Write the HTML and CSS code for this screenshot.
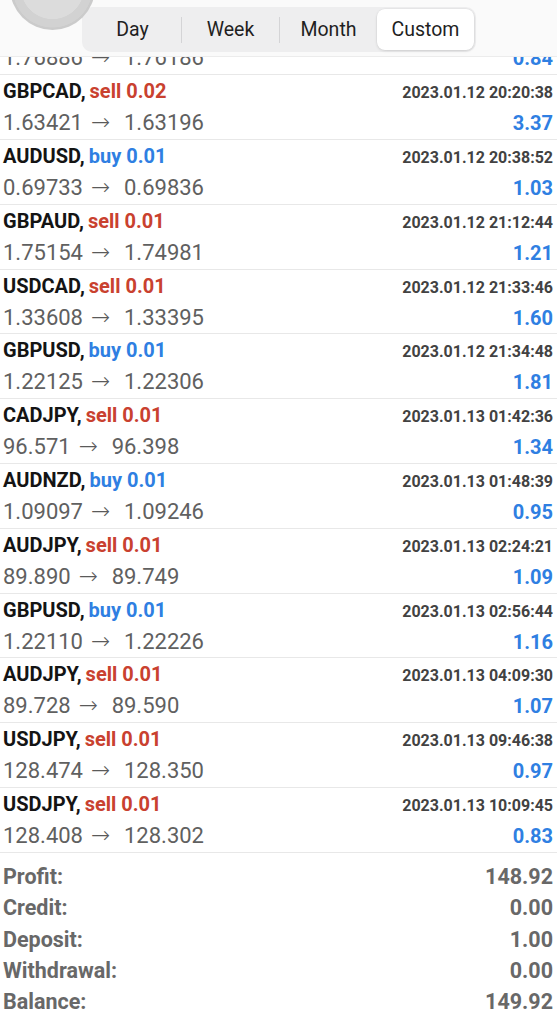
FILE: index.html
```html
<!DOCTYPE html>
<html>
<head>
<meta charset="utf-8">
<link rel="stylesheet" href="styles.css">
</head>
<body>
<div class="screen">
  <div class="list">
    <div class="row">
      <div class="line top"></div>
      <div class="line bottom"><span class="price">1.76886<span class="arrow">→</span>1.76186</span><span class="pl">0.84</span></div>
    </div>
    <div class="row">
      <div class="line top"><span class="head"><span class="sym">GBPCAD,</span> <span class="side sell">sell 0.02</span></span><span class="time">2023.01.12 20:20:38</span></div>
      <div class="line bottom"><span class="price">1.63421<span class="arrow">→</span>1.63196</span><span class="pl">3.37</span></div>
    </div>
    <div class="row">
      <div class="line top"><span class="head"><span class="sym">AUDUSD,</span> <span class="side buy">buy 0.01</span></span><span class="time">2023.01.12 20:38:52</span></div>
      <div class="line bottom"><span class="price">0.69733<span class="arrow">→</span>0.69836</span><span class="pl">1.03</span></div>
    </div>
    <div class="row">
      <div class="line top"><span class="head"><span class="sym">GBPAUD,</span> <span class="side sell">sell 0.01</span></span><span class="time">2023.01.12 21:12:44</span></div>
      <div class="line bottom"><span class="price">1.75154<span class="arrow">→</span>1.74981</span><span class="pl">1.21</span></div>
    </div>
    <div class="row">
      <div class="line top"><span class="head"><span class="sym">USDCAD,</span> <span class="side sell">sell 0.01</span></span><span class="time">2023.01.12 21:33:46</span></div>
      <div class="line bottom"><span class="price">1.33608<span class="arrow">→</span>1.33395</span><span class="pl">1.60</span></div>
    </div>
    <div class="row">
      <div class="line top"><span class="head"><span class="sym">GBPUSD,</span> <span class="side buy">buy 0.01</span></span><span class="time">2023.01.12 21:34:48</span></div>
      <div class="line bottom"><span class="price">1.22125<span class="arrow">→</span>1.22306</span><span class="pl">1.81</span></div>
    </div>
    <div class="row">
      <div class="line top"><span class="head"><span class="sym">CADJPY,</span> <span class="side sell">sell 0.01</span></span><span class="time">2023.01.13 01:42:36</span></div>
      <div class="line bottom"><span class="price">96.571<span class="arrow">→</span>96.398</span><span class="pl">1.34</span></div>
    </div>
    <div class="row">
      <div class="line top"><span class="head"><span class="sym">AUDNZD,</span> <span class="side buy">buy 0.01</span></span><span class="time">2023.01.13 01:48:39</span></div>
      <div class="line bottom"><span class="price">1.09097<span class="arrow">→</span>1.09246</span><span class="pl">0.95</span></div>
    </div>
    <div class="row">
      <div class="line top"><span class="head"><span class="sym">AUDJPY,</span> <span class="side sell">sell 0.01</span></span><span class="time">2023.01.13 02:24:21</span></div>
      <div class="line bottom"><span class="price">89.890<span class="arrow">→</span>89.749</span><span class="pl">1.09</span></div>
    </div>
    <div class="row">
      <div class="line top"><span class="head"><span class="sym">GBPUSD,</span> <span class="side buy">buy 0.01</span></span><span class="time">2023.01.13 02:56:44</span></div>
      <div class="line bottom"><span class="price">1.22110<span class="arrow">→</span>1.22226</span><span class="pl">1.16</span></div>
    </div>
    <div class="row">
      <div class="line top"><span class="head"><span class="sym">AUDJPY,</span> <span class="side sell">sell 0.01</span></span><span class="time">2023.01.13 04:09:30</span></div>
      <div class="line bottom"><span class="price">89.728<span class="arrow">→</span>89.590</span><span class="pl">1.07</span></div>
    </div>
    <div class="row">
      <div class="line top"><span class="head"><span class="sym">USDJPY,</span> <span class="side sell">sell 0.01</span></span><span class="time">2023.01.13 09:46:38</span></div>
      <div class="line bottom"><span class="price">128.474<span class="arrow">→</span>128.350</span><span class="pl">0.97</span></div>
    </div>
    <div class="row">
      <div class="line top"><span class="head"><span class="sym">USDJPY,</span> <span class="side sell">sell 0.01</span></span><span class="time">2023.01.13 10:09:45</span></div>
      <div class="line bottom"><span class="price">128.408<span class="arrow">→</span>128.302</span><span class="pl">0.83</span></div>
    </div>
  </div>
  <div class="summary">
    <div class="sum-line"><span>Profit:</span><span>148.92</span></div>
    <div class="sum-line"><span>Credit:</span><span>0.00</span></div>
    <div class="sum-line"><span>Deposit:</span><span>1.00</span></div>
    <div class="sum-line"><span>Withdrawal:</span><span>0.00</span></div>
    <div class="sum-line"><span>Balance:</span><span>149.92</span></div>
  </div>

  <div class="header">
    <div class="bubble"></div>
    <div class="segmented">
      <div class="seg">Day</div>
      <div class="divider"></div>
      <div class="seg">Week</div>
      <div class="divider"></div>
      <div class="seg">Month</div>
      <div class="seg selected">Custom</div>
    </div>
  </div>
</div>
</body>
</html>
```
FILE: styles.css
```css
html, body {
  margin: 0;
  padding: 0;
  background: #ffffff;
}

body {
  font-family: Roboto, "Liberation Sans", Arial, sans-serif;
  overflow: hidden;
}

.screen {
  position: relative;
  width: 557px;
  height: 1024px;
  overflow: hidden;
  background: #ffffff;
}

.list {
  padding-top: 10.2px;
}

.row {
  box-sizing: border-box;
  height: 64.83px;
  padding: 0 4px 0 3px;
  border-bottom: 1px solid #e8e8e8;
}

.line {
  display: flex;
  justify-content: space-between;
  align-items: baseline;
  white-space: nowrap;
}

.line.top {
  height: 32px;
  line-height: 32px;
}

.line.bottom {
  height: 31px;
  line-height: 31px;
}

.sym {
  font-size: 20px;
  font-weight: 700;
  color: #141414;
}

.side {
  font-size: 20px;
  font-weight: 700;
}

.sell {
  color: #c9412f;
}

.buy {
  color: #2f7fe2;
}

.time {
  font-size: 16px;
  font-weight: 700;
  color: #424242;
}

.price {
  font-size: 22px;
  font-weight: 400;
  color: #606060;
}

.arrow {
  display: inline-block;
  box-sizing: border-box;
  width: 41px;
  padding-left: 8px;
  font-family: "DejaVu Sans", sans-serif;
  font-size: 23px;
  font-weight: 300;
  line-height: 31px;
  color: #5a5a5a;
}

.pl {
  font-size: 20px;
  font-weight: 700;
  color: #2f7fe2;
}

.summary {
  padding: 8px 4px 0 3px;
}

.sum-line {
  display: flex;
  justify-content: space-between;
  height: 31.3px;
  line-height: 31.3px;
  font-size: 21.5px;
  font-weight: 700;
  color: #686868;
}

/* overlay header */
.header {
  position: absolute;
  top: 0;
  left: 0;
  right: 0;
  height: 57px;
  box-sizing: border-box;
  padding: 7px 0 0 82px;
  background: #fafafa;
  border-bottom: 1px solid #ececec;
  display: flex;
  align-items: flex-start;
}

.bubble {
  position: absolute;
  left: 10px;
  top: -55px;
  width: 85px;
  height: 85px;
  border-radius: 50%;
  background: radial-gradient(circle at 50% 50%, #dcdcdc 0 52%, #d2d2d2 53% 66%, #cbcbcb 67% 82%, #c3c3c3 83%);
}

.segmented {
  display: flex;
  align-items: center;
  box-sizing: border-box;
  height: 45px;
  padding: 2px;
  background: #eeeeef;
  border-radius: 10px;
}

.seg {
  width: 97px;
  height: 41px;
  line-height: 41px;
  text-align: center;
  font-size: 19.5px;
  color: #1f1f1f;
}

.seg.selected {
  background: #ffffff;
  border-radius: 8px;
  box-shadow: 0 1px 3px rgba(0, 0, 0, 0.12), 0 0 0 0.5px rgba(0, 0, 0, 0.04);
}

.divider {
  width: 1px;
  height: 26px;
  background: #d4d4d6;
}
```
